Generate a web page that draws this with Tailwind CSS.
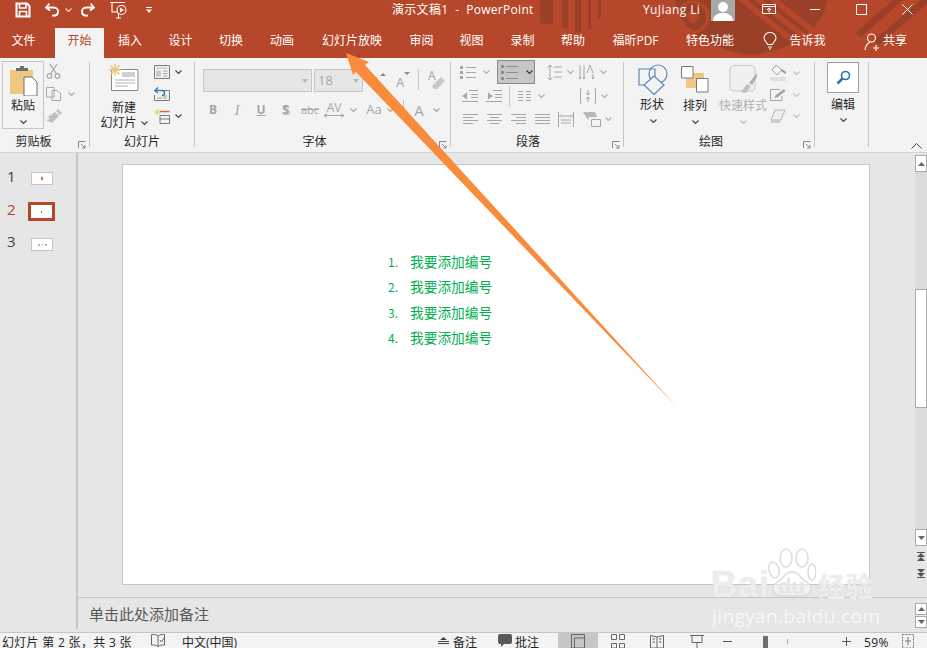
<!DOCTYPE html>
<html lang="zh-CN">
<head>
  <meta charset="UTF-8">
  <title>演示文稿1 - PowerPoint</title>
  <script src="https://cdn.jsdelivr.net/npm/@tailwindcss/browser@4"></script>
</head>
<body class="relative w-[927px] h-[648px] overflow-hidden bg-[#e6e6e6] text-[12px] text-[#262626] font-['Open_Sans','Noto_Sans_CJK_SC',sans-serif]">

  <svg class="hidden">
    <symbol id="chev" viewBox="0 0 7 4"><path d="M.5.5 3.5 3.5 6.5.5" fill="none" stroke="currentColor" stroke-width="1.1"/></symbol>
    <symbol id="launch" viewBox="0 0 8 8"><path d="M.5 7V.5H7.5M3 3 7 7M7 4V7H4" fill="none" stroke="#8a8a8a" stroke-width="1"/></symbol>
  </svg>

  <!-- title + tabs -->
  <header class="relative h-[58px] bg-[#b7472a] text-white overflow-hidden">
    <svg class="absolute left-0 top-0" width="927" height="58" fill="#9a3f28">
      <path d="M540 0h13v25l-13-2zM562 0h6v28h-6zM575 0h6v32h-6zM588 0h3v30h-3zM598 0h3v18h-3z"/>
      <path d="M675 0h152A92 60 0 0 1 751 55 92 60 0 0 1 675 0z"/>
      <circle cx="693" cy="17" r="15" fill="none" stroke="#b7472a" stroke-width="3"/>
      <circle cx="693" cy="17" r="6" fill="#b7472a"/>
      <path d="M738 0h9l57 46h-9zM754 0h9l50 40h-9zM770 0h9l42 34h-9z" fill="#b7472a"/>
      <path d="M855 33 893 0h10l-42 37zM873 41 921 0h6v4l-48 41z"/>
    </svg>

    <!-- title bar -->
    <div class="relative flex h-[28px] items-start">
      <div class="flex items-center h-[20px] pl-[15px]">
        <svg class="w-[16px] h-[16px]" viewBox="0 0 16 16" fill="none" stroke="#fff" stroke-width="2"><path d="M1.5 1.5H12L14.5 4V14.5H1.5Z"/><path d="M4.5 2V6H11V2M4.5 14V9.5H11.5V14" stroke-width="1.6"/></svg>
        <svg class="w-[16px] h-[16px] ml-[13px]" viewBox="0 0 16 16" fill="none" stroke="#fff" stroke-width="1.8"><path d="M5.5 1.5 2 5.5 6 8.5M2.5 5.5H9.5C13 5.5 14.500 8 14 10.500 13.500 13 11 14 8 13.500"/></svg>
        <svg class="w-[7px] h-[4px] ml-[5px] text-white/80"><use href="#chev"/></svg>
        <svg class="w-[16px] h-[16px] ml-[8px]" viewBox="0 0 16 16" fill="none" stroke="#fff" stroke-width="1.8"><path d="M10.500 1.500 14 5.500 10 8.500M13.500 5.500H6.500C3 5.500 1.500 8 2 10.500 2.500 13 5 14 8 13.500"/></svg>
        <svg class="w-[20px] h-[18px] ml-[13px]" viewBox="0 0 20 18" fill="none" stroke="#fff" stroke-width="1.1"><path d="M1 1.500H16M3 1.500V11H9M7 17H12M9.500 12V17"/><circle cx="12.500" cy="9" r="4.500"/><path d="M11 6.500 15 9 11 11.500Z" fill="#fff" stroke="none"/></svg>
        <svg class="w-[6px] h-[6px] ml-[17px]" viewBox="0 0 6 6" fill="#fff"><path d="M0 0H6V1H0ZM0 2.500H6L3 6Z"/></svg>
      </div>
      <div class="ml-[240px] mt-[1px] w-[140px] whitespace-pre tracking-[.3px] leading-[18px]">演示文稿1  -  PowerPoint</div>
      <div class="ml-[111px] mt-[1px] tracking-[.4px] leading-[18px] w-[68px]">YuJiang Li</div>
      <div class="w-[24px] h-[21px] bg-[#a8a8a8] overflow-hidden">
        <svg width="24" height="21" fill="#fff"><circle cx="12" cy="7" r="5"/><path d="M2 21C2 15 7 14 9 13h6c2 1 7 2 7 8z"/></svg>
      </div>
      <svg class="w-[14px] h-[10px] ml-[27px] mt-[4px]" viewBox="0 0 14 10" fill="none" stroke="#fff"><path d="M.5.5H13.500V9.500H.5ZM.5 2.500H13.500M7 8.500V4.500M5 6 7 4 9 6"/></svg>
      <div class="w-[10px] h-px bg-white ml-[34px] mt-[9px]"></div>
      <div class="w-[11px] h-[11px] border border-white ml-[36px] mt-[4px]"></div>
      <svg class="w-[11px] h-[11px] ml-[35px] mt-[4px]" viewBox="0 0 11 11" stroke="#fff"><path d="M.5.5 10.500 10.500M10.500.5.500 10.500"/></svg>
    </div>

    <!-- tabs -->
    <nav class="relative flex h-[30px] text-center leading-[26px]">
      <div class="w-[47px] mr-[8px]">文件</div>
      <div class="w-[49px] bg-[#f3f3f3] text-[#b7472a]">开始</div>
      <div class="w-[52px]">插入</div>
      <div class="w-[49px]">设计</div>
      <div class="w-[52px]">切换</div>
      <div class="w-[50px]">动画</div>
      <div class="w-[90px]">幻灯片放映</div>
      <div class="w-[49px]">审阅</div>
      <div class="w-[51px]">视图</div>
      <div class="w-[51px]">录制</div>
      <div class="w-[50px]">帮助</div>
      <div class="w-[75px]">福昕PDF</div>
      <div class="w-[74px]">特色功能</div>
      <svg class="w-[14px] h-[18px] ml-[16px] mt-[4px]" viewBox="0 0 14 18" fill="none" stroke="#fff" stroke-width="1.1"><path d="M4.500 12.500C4 10 1 9 1 6a6 5.500 0 0 1 12 0c0 3-3 4-3.500 6.500ZM5 15H9M6 17H8"/></svg>
      <div class="ml-[12px] w-[37px]">告诉我</div>
      <svg class="w-[16px] h-[18px] ml-[38px] mt-[5px]" viewBox="0 0 16 18" fill="none" stroke="#fff" stroke-width="1.1"><circle cx="7.500" cy="5" r="4"/><path d="M1 17C1.500 12 4 10 6 9M12 12V18M9 15H15"/></svg>
      <div class="ml-[3px]">共享</div>
    </nav>
  </header>

  <!-- ribbon -->
  <section class="flex h-[95px] bg-[#f3f3f3] border-b border-[#d4d4d4]">

    <!-- clipboard -->
    <div class="w-[89px] flex flex-col">
      <div class="flex h-[74px]">
        <div class="w-[42px] h-[68px] ml-[2px] mt-[3px] border border-[#c6c6c6] flex flex-col items-center">
          <svg class="w-[29px] h-[31px] mt-[3px] ml-[1px]" viewBox="0 0 29 31">
            <path d="M1 5H24V29H1Z" fill="#edc87e"/><path d="M7 6V3H11V1H15V3H19V6Z" fill="#6e6e6e"/>
            <path d="M15 12H23L28 17V31H15Z" fill="#fff" stroke="#6e6e6e"/>
          </svg>
          <div class="mt-[1px] leading-[18px]">粘贴</div>
          <svg class="w-[7px] h-[4px] mt-[5px] text-[#444]"><use href="#chev"/></svg>
        </div>
        <div class="flex flex-col ml-[2px] mt-[5px] text-[#b0b0b0]">
          <svg class="w-[15px] h-[16px]" viewBox="0 0 15 16" fill="none" stroke="#a8a8a8" stroke-width="1.3"><circle cx="3.500" cy="13" r="2.300"/><circle cx="11.500" cy="13" r="2.300"/><path d="M4.500 11 11 1M10.500 11 4 1"/></svg>
          <div class="flex items-center mt-[8px] h-[14px]">
            <svg class="w-[15px] h-[14px]" viewBox="0 0 15 14" fill="#f3f3f3" stroke="#a8a8a8"><path d="M.5.5H8V10H.5ZM6 3.500H11L14.500 6.500V13.500H6Z"/></svg>
            <svg class="w-[7px] h-[4px] ml-[7px]"><use href="#chev"/></svg>
          </div>
          <svg class="w-[16px] h-[15px] mt-[8px]" viewBox="0 0 16 15" fill="#c0c0c0"><path d="M9 3 13 7 6 14 0 11 4 10 2 8ZM10 2 12 0 16 4 14 6Z"/></svg>
        </div>
      </div>
      <div class="relative h-[20px] text-center leading-[20px] pr-[22px]">剪贴板
        <svg class="absolute right-[3px] top-[9px] w-[8px] h-[8px]"><use href="#launch"/></svg>
      </div>
    </div>
    <div class="w-px h-[85px] mt-[4px] bg-[#c6c6c6]"></div>

    <!-- slides -->
    <div class="w-[104px] flex flex-col">
      <div class="flex h-[74px]">
        <div class="w-[68px] flex flex-col items-center">
          <svg class="w-[31px] h-[28px] mt-[6px] -ml-[1px]" viewBox="0 0 31 28">
            <path d="M3.500 5.500H30V26.500H3.500Z" fill="#fff" stroke="#8a8a8a"/>
            <path d="M14 8H27V13H14Z" fill="#d0d0d0"/><path d="M7 16H27M7 19H27M7 22H20" stroke="#b0b0b0"/>
            <path d="M7 0V12M1 6H13M2.500 1.500 11.500 10.500M11.500 1.500 2.500 10.500" stroke="#edc87e" stroke-width="1.500"/>
          </svg>
          <div class="mt-[8px] leading-[15px]">新建</div>
          <div class="flex items-center leading-[15px]">幻灯片<svg class="w-[7px] h-[4px] ml-[4px] text-[#444]"><use href="#chev"/></svg></div>
        </div>
        <div class="flex flex-col mt-[6px] ml-[-4px]">
          <div class="flex items-center h-[16px]">
            <svg class="w-[16px] h-[14px]" viewBox="0 0 16 14" fill="none" stroke="#7a7a7a"><path d="M.5.5H15.500V13.500H.5Z"/><path d="M2.500 3H13.500" stroke="#b0b0b0"/><path d="M2 5.500H7V11.500H2Z" fill="#c8c8c8" stroke="none"/><path d="M9 6H13.500M9 8.500H13.500M9 11H13.500" stroke="#a0a0a0"/></svg>
            <svg class="w-[7px] h-[4px] ml-[5px] text-[#444]"><use href="#chev"/></svg>
          </div>
          <svg class="w-[16px] h-[14px] mt-[7px]" viewBox="0 0 16 14" fill="none"><path d="M4 3.500H15.500V13.500H.5V8" stroke="#7a7a7a"/><path d="M3 10H8V12H3ZM9 8H13V12H9Z" fill="#c8c8c8"/><path d="M4 .5 1 3.500 4 6M2 3.500H8A2.500 2.500 0 0 1 8 8.500" stroke="#3d7ab8" stroke-width="1.500"/></svg>
          <div class="flex items-center h-[16px] mt-[7px]">
            <svg class="w-[16px] h-[15px]" viewBox="0 0 16 15" fill="none"><path d="M3.500 0V6M.5 3H6.500M1.500 1 5.500 5M5.500 1 1.500 5" stroke="#edc87e"/><path d="M6 2.500H15.500" stroke="#d9652f" stroke-width="1.500"/><path d="M6 6.500H15.500V14.500H6ZM6 10H15.500" stroke="#7a7a7a"/></svg>
            <svg class="w-[7px] h-[4px] ml-[5px] text-[#444]"><use href="#chev"/></svg>
          </div>
        </div>
      </div>
      <div class="h-[20px] text-center leading-[20px]">幻灯片</div>
    </div>
    <div class="w-px h-[85px] mt-[4px] bg-[#c6c6c6]"></div>

    <!-- font -->
    <div class="w-[255px] flex flex-col text-[#a6a6a6]">
      <div class="h-[74px] pl-[8px]">
        <div class="flex h-[23px] mt-[11px]">
          <div class="w-[109px] bg-[#e6e6e6] border border-[#c6c6c6] flex items-center justify-end pr-[3px]"><svg class="w-[6px] h-[4px]" viewBox="0 0 6 4" fill="#b8b8b8"><path d="M0 0H6L3 4Z"/></svg></div>
          <div class="w-[49px] ml-[2px] bg-[#e6e6e6] border border-[#c6c6c6] flex items-center justify-between px-[3px]"><span class="text-[13px]">18</span><svg class="w-[6px] h-[4px]" viewBox="0 0 6 4" fill="#b8b8b8"><path d="M0 0H6L3 4Z"/></svg></div>
          <div class="flex w-[22px] ml-[5px] justify-center text-[14px] leading-[25px]">A<svg class="w-[6px] h-[3px] mt-[4px]" viewBox="0 0 6 3" fill="#8a8a8a"><path d="M0 3H6L3 0Z"/></svg></div>
          <div class="flex w-[20px] ml-[3px] justify-center text-[13px] leading-[27px] h-[23px]">A<svg class="w-[6px] h-[3px] mt-[3px]" viewBox="0 0 6 3" fill="#8a8a8a"><path d="M0 0H6L3 3Z"/></svg></div>
          <div class="w-px h-[21px] ml-[5px] bg-[#c6c6c6]"></div>
          <svg class="w-[18px] h-[20px] ml-[8px]" viewBox="0 0 18 20"><path d="M5 17 14 8 18 12 10 20H7Z" fill="#c8c8c8"/><text x="1" y="11" font-size="12" fill="#a6a6a6">A</text></svg>
        </div>
        <div class="flex items-center h-[22px] mt-[7px] -ml-[2px] text-center font-bold">
          <div class="w-[24px]">B</div>
          <div class="w-[24px] italic font-normal font-['Liberation_Serif',serif] text-[14px]">I</div>
          <div class="w-[24px] underline">U</div>
          <div class="w-[25px] text-[13px] [text-shadow:1px_1px_1px_#bbb]">S</div>
          <div class="w-[24px] font-normal line-through text-[11px]">abc</div>
          <div class="w-[24px] font-normal leading-[11px] text-[12px]">AV<svg class="w-[20px] h-[5px] block mx-auto" viewBox="0 0 20 5" fill="none" stroke="#a6a6a6"><path d="M0 2.500H20M3 .5 0 2.500 3 4.500M17 .5 20 2.500 17 4.500"/></svg></div>
          <svg class="w-[7px] h-[4px] ml-[4px]"><use href="#chev"/></svg>
          <div class="w-[22px] ml-[6px] font-normal text-[13px]">Aa</div>
          <svg class="w-[7px] h-[4px] ml-[2px]"><use href="#chev"/></svg>
          <div class="w-px h-[21px] ml-[9px] bg-[#c6c6c6]"></div>
          <div class="w-[22px] ml-[4px] font-normal text-[15px]">A</div>
          <svg class="w-[7px] h-[4px] ml-[3px]"><use href="#chev"/></svg>
        </div>
      </div>
      <div class="relative h-[20px] text-center leading-[20px] text-[#262626] pr-[16px]">字体
        <svg class="absolute right-[3px] top-[9px] w-[8px] h-[8px]"><use href="#launch"/></svg>
      </div>
    </div>
    <div class="w-px h-[85px] mt-[4px] bg-[#c6c6c6]"></div>

    <!-- paragraph -->
    <div class="w-[172px] flex flex-col text-[#b0b0b0]">
      <div class="h-[74px] pl-[9px]">
        <div class="flex items-center h-[24px] mt-[2px]">
          <svg class="w-[16px] h-[15px]" viewBox="0 0 16 15" fill="#a6a6a6"><path d="M0 1H3V4H0ZM0 6H3V9H0ZM0 11H3V14H0ZM6 2H16V3H6ZM6 7H16V8H6ZM6 12H16V13H6Z"/></svg>
          <svg class="w-[7px] h-[4px] ml-[7px]"><use href="#chev"/></svg>
          <div class="w-[38px] h-[24px] ml-[7px] bg-[#c6c6c6] border border-[#8a8a8a] flex items-center pl-[3px]">
            <svg class="w-[17px] h-[17px]" viewBox="0 0 17 17" fill="#8e8e8e"><path d="M5 2H17V3H5ZM5 8H17V9H5ZM5 14H17V15H5ZM0 1H3V4H0ZM0 7H3V10H0ZM0 13H3V16H0Z"/></svg>
            <svg class="w-[7px] h-[4px] ml-[8px] text-[#333]"><use href="#chev"/></svg>
          </div>
          <svg class="w-[15px] h-[17px] ml-[12px]" viewBox="0 0 15 17" fill="none" stroke="#a6a6a6"><path d="M3 1V16M.5 3.500 3 1 5.500 3.500M.5 13.500 3 16 5.500 13.500M7 3H15M7 8H15M7 13H15"/></svg>
          <svg class="w-[7px] h-[4px] ml-[5px]"><use href="#chev"/></svg>
          <svg class="w-[16px] h-[17px] ml-[5px]" viewBox="0 0 16 17" fill="none" stroke="#a6a6a6"><path d="M1 1V15M5 1V15M14 10V15M0 13 1 15 2 13M4 13 5 15 6 13M13 13 14 15 15 13M8 9 11 1 14 9"/></svg>
          <svg class="w-[7px] h-[4px] ml-[5px]"><use href="#chev"/></svg>
        </div>
        <div class="flex items-center h-[22px] mt-[1px]">
          <svg class="w-[16px] h-[12px] ml-[2px]" viewBox="0 0 16 12" fill="none" stroke="#a6a6a6"><path d="M7 .5H16M9 4.500H16M9 7.500H16M0 11.500H16"/><path d="M0 6 5 2.500V9.500Z" fill="#a6a6a6" stroke="none"/></svg>
          <svg class="w-[16px] h-[12px] ml-[8px]" viewBox="0 0 16 12" fill="none" stroke="#a6a6a6"><path d="M7 .5H16M9 4.500H16M9 7.500H16M0 11.500H16"/><path d="M7 6 2 2.500V9.500Z" fill="#a6a6a6" stroke="none"/></svg>
          <div class="w-px h-[21px] ml-[7px] bg-[#c6c6c6]"></div>
          <svg class="w-[13px] h-[10px] ml-[8px]" viewBox="0 0 13 10" stroke="#a6a6a6"><path d="M0 .5H5M0 3.500H5M0 6.500H5M0 9.500H5M8 .5H13M8 3.500H13M8 6.500H13M8 9.500H13"/></svg>
          <svg class="w-[7px] h-[4px] ml-[7px]"><use href="#chev"/></svg>
          <svg class="w-[16px] h-[16px] ml-[35px]" viewBox="0 0 16 16" fill="none" stroke="#a6a6a6"><path d="M2 1H0.500V15H2M14 1H15.500V15H14M8 2V7M6 5 8 7 10 5M8 14V9M6 11 8 9 10 11"/></svg>
          <svg class="w-[7px] h-[4px] ml-[5px]"><use href="#chev"/></svg>
        </div>
        <div class="flex items-center h-[22px] mt-[1px]">
          <svg class="w-[15px] h-[11px] ml-[3px]" viewBox="0 0 15 11" stroke="#a6a6a6"><path d="M0 .5H15M0 3.500H10M0 6.500H15M0 9.500H10"/></svg>
          <svg class="w-[15px] h-[11px] ml-[9px]" viewBox="0 0 15 11" stroke="#a6a6a6"><path d="M0 .5H15M3 3.500H12M0 6.500H15M3 9.500H12"/></svg>
          <svg class="w-[15px] h-[11px] ml-[9px]" viewBox="0 0 15 11" stroke="#a6a6a6"><path d="M0 .5H15M5 3.500H15M0 6.500H15M5 9.500H15"/></svg>
          <svg class="w-[15px] h-[11px] ml-[9px]" viewBox="0 0 15 11" stroke="#a6a6a6"><path d="M0 .5H15M0 3.500H15M0 6.500H15M0 9.500H15"/></svg>
          <svg class="w-[16px] h-[15px] ml-[8px]" viewBox="0 0 16 15" fill="none" stroke="#a6a6a6"><path d="M.5 0V15M15.500 0V15M3 4H13M3 2.500 1.500 4 3 5.500M13 2.500 14.500 4 13 5.500M3 8H13M3 11H13"/></svg>
          <svg class="w-[18px] h-[15px] ml-[9px]" viewBox="0 0 18 15"><path d="M0 0H12L14 5H6L5 8Z" fill="#b8b8b8"/><path d="M8.500 7.500H17.500V14.500H8.500Z" fill="#f3f3f3" stroke="#a6a6a6"/></svg>
          <svg class="w-[7px] h-[4px] ml-[4px]"><use href="#chev"/></svg>
        </div>
      </div>
      <div class="relative h-[20px] text-center leading-[20px] text-[#262626] pr-[18px]">段落
        <svg class="absolute right-[3px] top-[9px] w-[8px] h-[8px]"><use href="#launch"/></svg>
      </div>
    </div>
    <div class="w-px h-[85px] mt-[4px] bg-[#c6c6c6]"></div>

    <!-- drawing -->
    <div class="w-[190px] flex flex-col">
      <div class="flex h-[74px]">
        <div class="w-[56px] flex flex-col items-center">
          <svg class="w-[30px] h-[31px] mt-[6px] ml-[1px]" viewBox="0 0 30 31" fill="none" stroke="#5b87bd" stroke-width="1.200">
            <path d="M1 5H17V21H1Z"/><circle cx="20" cy="10" r="9"/><path d="M16 12 26 21 16 30.500 6 21Z" fill="#f3f3f3"/>
          </svg>
          <div class="mt-[1px] text-[#222] leading-[18px]">形状</div>
          <svg class="w-[7px] h-[4px] mt-[5px] ml-[3px] text-[#444]"><use href="#chev"/></svg>
        </div>
        <div class="w-[40px] -ml-[5px] flex flex-col items-center">
          <svg class="w-[28px] h-[28px] mt-[8px]" viewBox="0 0 28 28">
            <path d="M5 7H23V22H5Z" fill="#edc87e"/><path d="M.5.5H12V12H.5ZM15.500 12.500H27V26H15.500Z" fill="#fff" stroke="#7a7a7a"/>
          </svg>
          <div class="mt-[3px] leading-[18px]">排列</div>
          <svg class="w-[7px] h-[4px] mt-[5px] text-[#444]"><use href="#chev"/></svg>
        </div>
        <div class="w-[58px] -ml-[1px] flex flex-col items-center text-[#bdbdbd]">
          <svg class="w-[29px] h-[30px] mt-[7px]" viewBox="0 0 29 30"><path d="M6 .5H22Q26 .5 26 5V22Q26 26 21 26H6Q1 26 1 22V5Q1 .5 6 .5Z" fill="#f2eff3" stroke="#c8c8c8"/><path d="M12 27 18 19 22 21 17 28Z" fill="#c0c0c0"/><path d="M20 18 28 8V12L23 20Z" fill="#b0b0b0"/></svg>
          <div class="mt-[2px] text-[#b0b0b0] whitespace-nowrap leading-[18px]">快速样式</div>
          <svg class="w-[7px] h-[4px] mt-[5px]"><use href="#chev"/></svg>
        </div>
        <div class="flex flex-col ml-[-2px] mt-[6px] text-[#c0c0c0]">
          <div class="flex items-center h-[17px]">
            <svg class="w-[17px] h-[17px]" viewBox="0 0 17 17"><path d="M6 1 12 6 7 11 2 6Z" fill="#f3f3f3" stroke="#a6a6a6"/><path d="M12 5 16 8V10L11 7Z" fill="#999"/><path d="M0 13H16V17H0Z" fill="#e0e0e0"/></svg>
            <svg class="w-[7px] h-[4px] ml-[6px]"><use href="#chev"/></svg>
          </div>
          <div class="flex items-center h-[15px] mt-[6px]">
            <svg class="w-[16px] h-[12px]" viewBox="0 0 16 12" fill="none"><path d="M10 .5H.5V11.500H12V7" stroke="#a6a6a6"/><path d="M4 9 6 6 14 0 15.500 2 8 8Z" fill="#a6a6a6"/></svg>
            <svg class="w-[7px] h-[4px] ml-[7px]"><use href="#chev"/></svg>
          </div>
          <div class="flex items-center h-[16px] mt-[6px]">
            <svg class="w-[16px] h-[14px]" viewBox="0 0 16 14"><path d="M5 1H15L11 11H1Z" fill="#eee" stroke="#b5b5b5"/><path d="M1 11H11L10 14H1Z" fill="#ccc"/></svg>
            <svg class="w-[7px] h-[4px] ml-[7px]"><use href="#chev"/></svg>
          </div>
        </div>
      </div>
      <div class="relative h-[20px] text-center leading-[20px] pr-[16px]">绘图
        <svg class="absolute right-[3px] top-[9px] w-[8px] h-[8px]"><use href="#launch"/></svg>
      </div>
    </div>
    <div class="w-px h-[85px] mt-[4px] bg-[#c6c6c6]"></div>

    <!-- editing -->
    <div class="w-[53px] flex flex-col items-center">
      <div class="w-[32px] h-[31px] mt-[4px] ml-[3px] bg-white border border-[#a0a0a0] flex items-center justify-center">
        <svg class="w-[15px] h-[15px]" viewBox="0 0 15 15" fill="none" stroke="#2f6fb0"><circle cx="9.500" cy="5.500" r="4" stroke-width="1.600"/><path d="M6.500 8.500 1.500 13.500" stroke-width="2.500"/></svg>
      </div>
      <div class="mt-[3px] ml-[3px] leading-[18px]">编辑</div>
      <svg class="w-[7px] h-[4px] mt-[4px] ml-[3px] text-[#444]"><use href="#chev"/></svg>
    </div>
    <div class="w-px h-[85px] mt-[4px] bg-[#c6c6c6]"></div>
    <div class="flex-1 flex justify-end items-end pr-[5px] pb-[3px]">
      <svg class="w-[11px] h-[6px]" viewBox="0 0 11 6" fill="none" stroke="#444"><path d="M.5 5.500 5.500.5 10.500 5.500"/></svg>
    </div>
  </section>

  <!-- workspace -->
  <main class="flex h-[479px]">
    <aside class="w-[78px] shrink-0 border-r-2 border-[#c6c6c6] h-[476px] pt-[9px] text-[15px] text-[#444]">
      <div class="flex items-center h-[33px] pl-[7px]">
        <span class="w-[15px] -mt-[5px]">1</span>
        <div class="w-[22px] h-[13px] ml-[9px] bg-white border border-[#c6c6c6] flex items-center justify-center"><div class="w-[2px] h-[3px] bg-[#c8713a]"></div></div>
      </div>
      <div class="flex items-center h-[33px] pl-[7px] text-[#c0392b]">
        <span class="w-[15px] -mt-[5px]">2</span>
        <div class="w-[27px] h-[19px] ml-[6px] bg-white border-[3px] border-[#b7472a] flex items-center justify-center"><div class="w-px h-[2px] bg-[#00b050]"></div></div>
      </div>
      <div class="flex items-center h-[33px] pl-[7px]">
        <span class="w-[15px] -mt-[6px]">3</span>
        <div class="w-[22px] h-[13px] ml-[9px] bg-white border border-[#c6c6c6] flex items-center justify-center gap-[2px]"><div class="w-[2px] h-[2px] bg-[#c9b0a0]"></div><div class="w-px h-px bg-[#999]"></div><div class="w-[2px] h-[2px] bg-[#c9b0a0]"></div></div>
      </div>
    </aside>

    <div class="flex-1 flex flex-col min-w-0">
      <div class="flex h-[445px] border-b border-[#c6c6c6]">
        <!-- slide -->
        <div class="flex-1 pl-[45px] pt-[11px]">
          <div class="w-[748px] h-[421px] -ml-px bg-white border border-[#c6c6c6] pl-[265px] pt-[84px] text-[#00b050]">
            <ol class="text-[13.700px] leading-[25.300px] font-['Noto_Sans_CJK_SC',sans-serif]">
              <li class="flex"><span class="w-[22px] text-[12px]">1.</span>我要添加编号</li>
              <li class="flex"><span class="w-[22px] text-[12px]">2.</span>我要添加编号</li>
              <li class="flex"><span class="w-[22px] text-[12px]">3.</span>我要添加编号</li>
              <li class="flex"><span class="w-[22px] text-[12px]">4.</span>我要添加编号</li>
            </ol>
          </div>
        </div>
        <!-- scrollbar -->
        <div class="w-[12px] pt-[2px] flex flex-col">
          <div class="h-[17px] bg-white border border-[#ababab] flex items-center justify-center"><svg class="w-[7px] h-[4px]" viewBox="0 0 7 4" fill="#666"><path d="M0 4H7L3.500 0Z"/></svg></div>
          <div class="h-[117px] bg-[#dbdbdb]"></div>
          <div class="h-[119px] bg-white border border-[#ababab]"></div>
          <div class="h-[121px] bg-[#dbdbdb]"></div>
          <div class="h-[17px] bg-white border border-[#ababab] flex items-center justify-center"><svg class="w-[7px] h-[4px]" viewBox="0 0 7 4" fill="#666"><path d="M0 0H7L3.500 4Z"/></svg></div>
          <svg class="w-[8px] h-[9px] mt-[6px] mx-auto" viewBox="0 0 8 9" fill="#555"><path d="M0 1H8V0H0ZM4 1 8 5H0ZM4 5 8 9H0Z"/></svg>
          <svg class="w-[8px] h-[9px] mt-[8px] mx-auto" viewBox="0 0 8 9" fill="#555"><path d="M0 8H8V9H0ZM4 8 8 4H0ZM4 4 8 0H0Z"/></svg>
        </div>
      </div>
      <!-- notes -->
      <div class="flex h-[33px]">
        <div class="flex-1 pl-[11px] text-[15px] leading-[33px] text-[#595959]">单击此处添加备注</div>
        <div class="w-[12px] pt-[5px]">
          <div class="h-[12px] bg-white border border-[#ababab] flex items-center justify-center"><svg class="w-[7px] h-[4px]" viewBox="0 0 7 4" fill="#666"><path d="M0 4H7L3.500 0Z"/></svg></div>
          <div class="h-[12px] mt-[1px] bg-white border border-[#ababab] flex items-center justify-center"><svg class="w-[7px] h-[4px]" viewBox="0 0 7 4" fill="#666"><path d="M0 0H7L3.500 4Z"/></svg></div>
        </div>
      </div>
    </div>
  </main>

  <!-- status bar -->
  <footer class="flex items-start h-[16px] bg-[#f3f3f3] border-t border-[#c6c6c6] leading-[19px] overflow-hidden whitespace-pre">
    <div class="ml-[2px] w-[149px] tracking-[.3px]">幻灯片 第 2 张，共 3 张</div>
    <svg class="w-[14px] h-[13px] mt-[1px]" viewBox="0 0 14 13" fill="none" stroke="#666"><path d="M7 2C5 .5 3 .5 .5 .5V11C3 11 5 11 7 12.500V2C9 .5 11 .5 13.500 .5V11C11 11 9 11 7 12.500M9 6 10.500 8 13 4"/></svg>
    <div class="ml-[17px] w-[256px]">中文(中国)</div>
    <svg class="w-[11px] h-[7px] mt-[4px]" viewBox="0 0 11 7" fill="#444"><path d="M5.500 0 9 3H2ZM0 4H11V5H0ZM0 6H11V7H0Z"/></svg>
    <div class="ml-[4px] w-[45px]">备注</div>
    <svg class="w-[14px] h-[13px] mt-[1px]" viewBox="0 0 14 13" fill="#595959"><path d="M2 0H12Q14 0 14 2V8Q14 10 12 10H6L3 13V10H2Q0 10 0 8V2Q0 0 2 0Z"/></svg>
    <div class="ml-[3px] w-[43px]">批注</div>
    <div class="w-[40px] h-[16px] bg-[#c6c6c6] flex justify-center">
      <svg class="w-[14px] h-[14px] mt-[1px]" viewBox="0 0 14 14" fill="none" stroke="#666"><path d="M.5.5H13.500V14H.5ZM3.500 14V4H13.500"/></svg>
    </div>
    <svg class="w-[14px] h-[14px] ml-[13px] mt-[1px]" viewBox="0 0 14 14" fill="none" stroke="#666"><path d="M.5.5H5.500V5.500H.5ZM8.500.5H13.500V5.500H8.500ZM.5 9.500H5.500V14H.5ZM8.500 9.500H13.500V14H8.500Z"/></svg>
    <svg class="w-[14px] h-[14px] ml-[25px] mt-[1px]" viewBox="0 0 14 14" fill="none" stroke="#666"><path d="M.5 1.500 7 3 13.500 1.500V14H.5ZM7 3V14M2.500 5H5M2.500 8H5M9 5H11.500M9 8H11.500"/></svg>
    <svg class="w-[14px] h-[14px] ml-[26px] mt-[1px]" viewBox="0 0 14 14" fill="none" stroke="#666"><path d="M0 1.500H14M2 1.500V8.500H12V1.500M7 8.500V14"/></svg>
    <div class="w-[9px] h-px bg-[#555] ml-[19px] mt-[8px]"></div>
    <div class="relative w-[100px] h-[16px] ml-[5px]">
      <div class="h-px bg-[#a6a6a6] mt-[8px]"></div>
      <div class="absolute left-[26px] top-[3px] w-[5px] h-[13px] bg-[#6e6e6e]"></div>
      <div class="absolute left-[50px] top-[6px] w-px h-[5px] bg-[#a6a6a6]"></div>
    </div>
    <svg class="w-[9px] h-[9px] ml-[5px] mt-[4px]" viewBox="0 0 9 9" stroke="#555"><path d="M4.500 0V9M0 4.500H9"/></svg>
    <div class="ml-[13px] w-[26px] tracking-[.4px]">59%</div>
    <svg class="w-[12px] h-[14px] ml-[12px] mt-[1px]" viewBox="0 0 12 14" fill="none" stroke="#777"><path d="M.5.5H11.500V14H.5Z" stroke-dasharray="2 1"/><path d="M6 3V11M3 7H9"/></svg>
  </footer>

  <!-- annotation arrow -->
  <svg class="absolute left-0 top-0 pointer-events-none" width="927" height="648">
    <path d="M346 53 369 62 365 65 677 407 356 72 353 75Z" fill="#f98b3c"/>
  </svg>

  <!-- watermark -->
  <div class="absolute left-[710px] top-[546px] w-[170px] h-[82px] text-white/70 pointer-events-none">
    <svg class="absolute left-[58px] top-0" width="48" height="55" viewBox="0 0 48 55" fill="none" stroke="#dcdcdc" stroke-width="1.500">
      <ellipse cx="6" cy="24" rx="5" ry="8" transform="rotate(-15 6 24)"/><ellipse cx="18" cy="12" rx="6" ry="9"/><ellipse cx="34" cy="12" rx="6" ry="9"/><ellipse cx="44" cy="26" rx="4" ry="8"/>
      <path d="M24 26C16 26 16 33 8 37 2 41 6 51 16 50H32C42 51 46 41 40 37 32 33 32 26 24 26Z" fill="#fff" fill-opacity=".45"/>
    </svg>
    <div class="absolute left-[1px] top-[19px] text-[36px] font-bold leading-[40px] tracking-[1px] [text-shadow:0_0_1px_#c8c8c8] font-['Liberation_Sans',sans-serif]">Bai</div>
    <div class="absolute left-[68px] top-[28px] text-[22px] font-bold leading-[26px] text-[#e6e6e6] font-['Liberation_Sans',sans-serif]">du</div>
    <div class="absolute left-[108px] top-[24px] text-[27px] font-bold leading-[32px] tracking-[1px] [text-shadow:0_0_1px_#c8c8c8] font-['Noto_Sans_CJK_SC',sans-serif] whitespace-nowrap">经验</div>
    <div class="absolute left-[2px] top-[59px] text-[19px] leading-[23px] tracking-[.4px] whitespace-nowrap font-['Open_Sans',sans-serif]">jingyan.baidu.com</div>
  </div>
</body>
</html>
